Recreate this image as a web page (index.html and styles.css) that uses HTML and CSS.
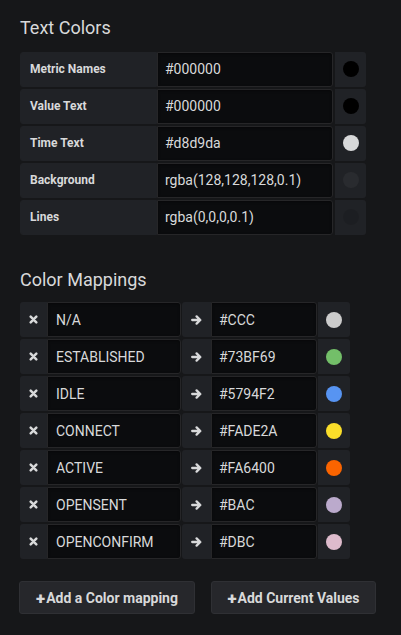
FILE: index.html
```html
<!DOCTYPE html>
<html lang="en">

<head>
    <meta charset="UTF-8">
    <meta name="viewport" content="width=device-width, initial-scale=1.0">
    <title>Colors</title>
    <link rel="stylesheet" href="styles.css">
</head>

<body>
    <div class="editor">
        <h5 class="section-title">Text Colors</h5>
        <div class="form-list">
            <div class="form-row">
                <label class="form-label">Metric Names</label>
                <input class="form-input wide" type="text" value="#000000">
                <span class="swatch-cell"><span class="dot" style="background:#000000"></span></span>
            </div>
            <div class="form-row">
                <label class="form-label">Value Text</label>
                <input class="form-input wide" type="text" value="#000000">
                <span class="swatch-cell"><span class="dot" style="background:#000000"></span></span>
            </div>
            <div class="form-row">
                <label class="form-label">Time Text</label>
                <input class="form-input wide" type="text" value="#d8d9da">
                <span class="swatch-cell"><span class="dot" style="background:#d8d9da"></span></span>
            </div>
            <div class="form-row">
                <label class="form-label">Background</label>
                <input class="form-input wide" type="text" value="rgba(128,128,128,0.1)">
                <span class="swatch-cell"><span class="dot" style="background:rgba(128,128,128,0.1)"></span></span>
            </div>
            <div class="form-row">
                <label class="form-label">Lines</label>
                <input class="form-input wide" type="text" value="rgba(0,0,0,0.1)">
                <span class="swatch-cell"><span class="dot" style="background:rgba(0,0,0,0.1)"></span></span>
            </div>
        </div>

        <h5 class="section-title mappings-title">Color Mappings</h5>
        <div class="form-list" id="mappings"></div>

        <div class="actions">
            <button class="btn btn-mapping" type="button"><span class="plus">+</span>Add a Color mapping</button>
            <button class="btn btn-current" type="button"><span class="plus">+</span>Add Current Values</button>
        </div>
    </div>
    <script>
        (function (window, document) {
            var mappings = [
                ['N/A', '#CCC'],
                ['ESTABLISHED', '#73BF69'],
                ['IDLE', '#5794F2'],
                ['CONNECT', '#FADE2A'],
                ['ACTIVE', '#FA6400'],
                ['OPENSENT', '#BAC'],
                ['OPENCONFIRM', '#DBC']
            ],
                list = document.getElementById('mappings'),
                removeIcon = '<svg width="9" height="9" viewBox="0 0 9 9"><path d="M1.7 1.7L7.3 7.3M7.3 1.7L1.7 7.3" stroke="#d8d9da" stroke-width="2.5" stroke-linecap="round"/></svg>',
                arrowIcon = '<svg width="11" height="10" viewBox="0 0 11 10"><path d="M1.2 5H9M5.6 1.4L9.3 5L5.6 8.6" fill="none" stroke="#d8d9da" stroke-width="2.3" stroke-linecap="round" stroke-linejoin="round"/></svg>',
                i, row;
            for (i = 0; i < mappings.length; i++) {
                row = document.createElement('div');
                row.className = 'form-row';
                row.innerHTML = `<span class="icon-cell remove">${removeIcon}</span>` +
                    `<input class="form-input name" type="text" value="${mappings[i][0]}">` +
                    `<span class="icon-cell arrow">${arrowIcon}</span>` +
                    `<input class="form-input color" type="text" value="${mappings[i][1]}">` +
                    `<span class="swatch-cell map"><span class="dot" style="background:${mappings[i][1]}"></span></span>`;
                list.appendChild(row);
            }
        })(window, document)
    </script>
</body>

</html>
```

FILE: styles.css
```css
* {
    margin: 0;
    padding: 0;
    box-sizing: border-box;
}

html {
    height: 100%;
}

body {
    height: 100%;
    overflow: hidden;
    background-color: #161719;
    color: #d8d9da;
    font-family: Roboto, "Liberation Sans", sans-serif;
}

.editor {
    padding: 17px 20px 0 20px;
}

.section-title {
    font-size: 18px;
    font-weight: 400;
    line-height: 21.6px;
    color: #d8d9da;
    margin-bottom: 13px;
}

.mappings-title {
    margin-top: 34px;
    margin-bottom: 12px;
}

.form-list {
    display: flex;
    flex-direction: column;
    gap: 2px;
}

.form-row {
    display: flex;
    height: 35px;
}

.form-label {
    width: 137px;
    height: 35px;
    display: flex;
    align-items: center;
    padding-left: 9px;
    background-color: #202226;
    border: 1px solid #202226;
    border-radius: 3px 0 0 3px;
    font-size: 12px;
    font-weight: 700;
    color: #d8d9da;
}

.form-input {
    height: 35px;
    background-color: #0b0c0e;
    border: 1px solid #262628;
    border-radius: 3px;
    color: #d8d9da;
    font-family: Roboto, "Liberation Sans", sans-serif;
    font-size: 14px;
    padding-left: 7px;
    outline: none;
    box-shadow: inset 0 1px 3px rgba(0, 0, 0, 0.4);
}

.form-input.wide {
    width: 176px;
    border-radius: 0 3px 3px 0;
}

.swatch-cell {
    width: 31px;
    height: 35px;
    margin-left: 2px;
    background-color: #202226;
    border-radius: 0 3px 3px 0;
    display: flex;
    align-items: center;
    justify-content: center;
}

.swatch-cell.map {
    width: 32px;
    margin-left: 1px;
}

.dot {
    width: 16px;
    height: 16px;
    border-radius: 50%;
}

.icon-cell {
    height: 35px;
    background-color: #202226;
    display: flex;
    align-items: center;
    justify-content: center;
}

.icon-cell.remove {
    width: 27px;
    border-radius: 3px 0 0 3px;
}

.icon-cell.arrow {
    width: 29px;
    margin-left: 1px;
    border-radius: 3px 0 0 3px;
}

.form-input.name {
    width: 134px;
    padding-left: 8px;
    border-radius: 0 3px 3px 0;
}

.form-input.color {
    width: 106px;
    padding-left: 7px;
    border-radius: 0 3px 3px 0;
}

.actions {
    display: flex;
    gap: 16px;
    margin-top: 22px;
    margin-left: -1px;
}

.btn {
    height: 33px;
    background-color: #26272b;
    border: 1px solid #2f3034;
    border-radius: 3px;
    color: #d8d9da;
    font-family: Roboto, "Liberation Sans", sans-serif;
    font-size: 14px;
    font-weight: 700;
    display: flex;
    align-items: center;
    justify-content: center;
}

.btn-mapping {
    width: 176px;
}

.btn-current {
    width: 165px;
}

.plus {
    font-size: 17px;
    font-weight: 900;
    margin-right: 1px;
}
```
